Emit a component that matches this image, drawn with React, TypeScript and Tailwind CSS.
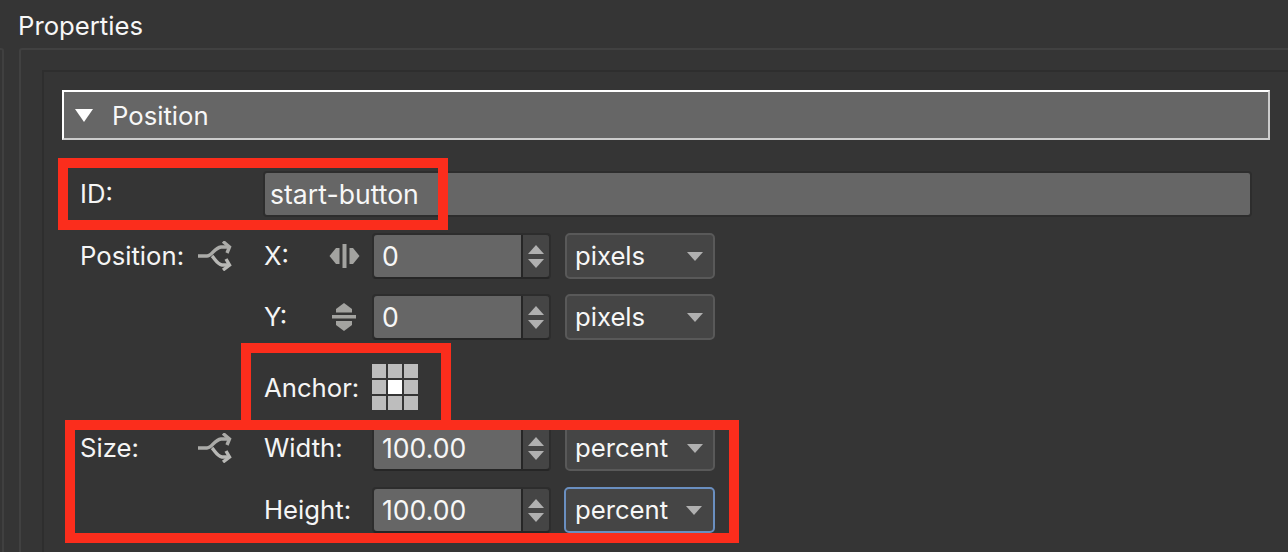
const fontClass = "font-['Inter','Liberation_Sans',sans-serif]"

const SplitIcon = () => (
  <svg width="36" height="30" viewBox="0 0 36 30" fill="none" stroke="#ababa8" strokeWidth="3.4" className="shrink-0">
    <path d="M1 15 H10 C15 15 17 7 24 6 H32" />
    <path d="M15 15 C18 18 20 23 25 24 H32" stroke="#b8b8b5" />
    <path d="M26 0.5 L32.5 6 L30 12" />
    <path d="M29 18 L32.5 24 L26 29" stroke="#b8b8b5" />
  </svg>
)

const HorizontalIcon = () => (
  <svg width="31" height="24" viewBox="0 0 31 24" fill="#a3a3a0">
    <rect x="13.5" y="0" width="4" height="24" />
    <path d="M0.5 12 L7 4 H10.5 V20 H7 Z" />
    <path d="M30.5 12 L24 4 H20.5 V20 H24 Z" />
  </svg>
)

const VerticalIcon = () => (
  <svg width="24" height="30" viewBox="0 0 24 30" fill="#a3a3a0">
    <rect x="0" y="13" width="24" height="3.5" />
    <path d="M12 1 L20 7 V10.5 H4 V7 Z" />
    <path d="M12 29 L20 23 V19 H4 V23 Z" />
  </svg>
)

const AnchorGrid = () => (
  <div className="grid grid-cols-3 gap-[2px] w-[46px] h-[46px] mt-[1px]">
    {[0, 1, 2, 3, 4, 5, 6, 7, 8].map((i) => (
      <div key={i} className={i === 4 ? "bg-white" : "bg-[#bdbdbd]"} />
    ))}
  </div>
)

const Spinner = ({ value }: { value: string }) => (
  <div className="flex h-[46px] w-[179px] shrink-0 rounded-[4px] border-2 border-[#2d2d2d] border-b-[#262626]">
    <div className="flex flex-1 items-center bg-[#666666] pl-[8px] rounded-l-[3px] border-r-2 border-[#262626] text-[26.6px] text-[#f7f7f7]">{value}</div>
    <div className="flex w-[26px] flex-col items-center justify-center gap-[5px] rounded-r-[3px] bg-[#454545]">
      <div className="h-0 w-0 border-x-[8px] border-b-[9px] border-x-transparent border-b-[#b0b0b0]" />
      <div className="h-0 w-0 border-x-[8px] border-t-[9px] border-x-transparent border-t-[#b0b0b0]" />
    </div>
  </div>
)

const Select = ({ value, focused }: { value: string; focused?: boolean }) => (
  <div
    className={
      focused
        ? "flex h-[46px] w-[151px] shrink-0 items-center justify-between rounded-[5px] border-2 border-[#6a8fc0] bg-[#454545] pl-[9px] pr-[11px] text-[#f7f7f7] -ml-px"
        : "flex h-[46px] w-[150px] shrink-0 items-center justify-between rounded-[5px] border-2 border-[#595959] bg-[#454545] pl-[8px] pr-[10px] text-[#f7f7f7]"
    }
  >
    <span>{value}</span>
    <div className="h-0 w-0 border-x-[8px] border-t-[9px] border-x-transparent border-t-[#b0b0b0]" />
  </div>
)

type RowProps = {
  left?: string
  split?: boolean
  label: string
  axis?: React.ReactNode
  value: string
  unit: string
  focused?: boolean
  className?: string
}

const Row = ({ left, split, label, axis, value, unit, focused, className }: RowProps) => (
  <div className={`flex items-center h-[46px] ${className ?? ""}`}>
    <div className="w-[135px] pl-[18px] text-[#f5f5f5] shrink-0">{left}</div>
    <div className="w-[67px] shrink-0">{split && <SplitIcon />}</div>
    <div className="w-[64px] shrink-0 text-[#f5f5f5] whitespace-nowrap">{label}</div>
    <div className="flex w-[44px] shrink-0 justify-center pr-[12px]">{axis}</div>
    <Spinner value={value} />
    <div className="w-[14px] shrink-0" />
    <Select value={unit} focused={focused} />
  </div>
)

export default function App() {
  return (
    <div className={`relative h-[552px] w-full overflow-hidden bg-[#353535] text-[25.7px] leading-none ${fontClass}`}>
      <div className="flex h-[48px] items-center pl-[18px] pt-[3px] text-[#f7f7f7]">Properties</div>

      <div className="flex h-[504px]">
        <div className="w-[4px] border-r-2 border-t-2 border-[#404040] rounded-tr-[3px]" />
        <div className="ml-[15px] flex-1 border-l-2 border-t-2 border-[#414141] rounded-tl-[3px] pl-[21px] pt-[20px]">
          <div className="h-full border-l-2 border-t-2 border-[#2e2e2e] pl-[18px] pt-[18px]">
            <div className="flex h-[50px] w-[1208px] items-center border-2 border-white border-b-[#cccccc] border-r-[#cccccc] bg-[#666666] pl-[11px] text-[#f7f7f7]">
              <div className="h-0 w-0 border-x-[9px] border-t-[13px] border-x-transparent border-t-white" />
              <span className="ml-[19px] pt-[2px]">Position</span>
            </div>

            <div className="flex h-[46px] mt-[31px] items-center">
              <div className="w-[201px] shrink-0 pl-[18px] text-[#f5f5f5]">ID:</div>
              <div className="flex h-[46px] w-[989px] items-center rounded-[4px] border-2 border-[#2d2d2d] bg-[#666666] pl-[5px] text-[26.6px] text-[#f7f7f7]">
                start-button
              </div>
            </div>

            <Row className="mt-[16px]" left="Position:" split label="X:" axis={<HorizontalIcon />} value="0" unit="pixels" />
            <Row className="mt-[15px]" label="Y:" axis={<VerticalIcon />} value="0" unit="pixels" />

            <div className="flex h-[46px] mt-[23px] items-center">
              <div className="w-[202px] shrink-0" />
              <div className="w-[108px] shrink-0 pt-[3px] text-[#f5f5f5]">Anchor:</div>
              <AnchorGrid />
            </div>

            <Row className="mt-[16px]" left="Size:" split label="Width:" value="100.00" unit="percent" />
            <Row className="mt-[16px]" label="Height:" value="100.00" unit="percent" focused />
          </div>
        </div>
      </div>

      {/* annotation boxes drawn over the screenshot */}
      <div className="absolute left-[58px] top-[158px] h-[72px] w-[390px] border-[10px] border-[#fb2d1c]" />
      <div className="absolute left-[241px] top-[343px] h-[87px] w-[210px] border-[10px] border-[#fb2d1c]" />
      <div className="absolute left-[65px] top-[420px] h-[123px] w-[674px] border-[10px] border-[#fb2d1c]" />
    </div>
  )
}
